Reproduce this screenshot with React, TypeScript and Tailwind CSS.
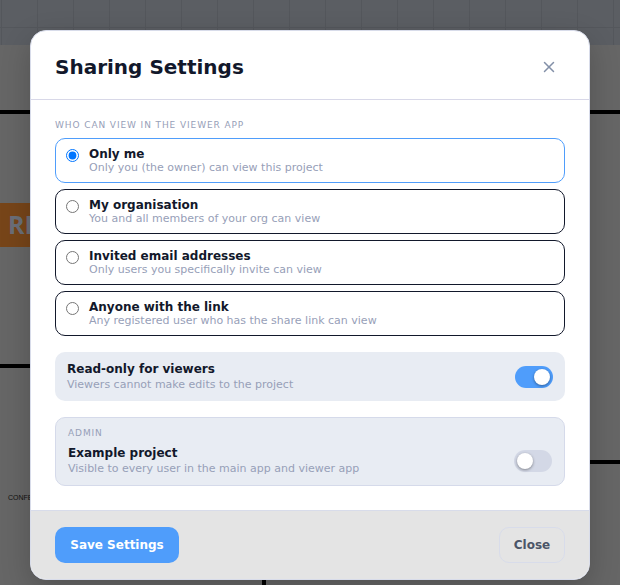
import { useState } from 'react'
import { X } from 'lucide-react'

const OPTIONS = [
  { id: 'owner', title: 'Only me', hint: 'Only you (the owner) can view this project' },
  { id: 'org', title: 'My organisation', hint: 'You and all members of your org can view' },
  { id: 'invited', title: 'Invited email addresses', hint: 'Only users you specifically invite can view' },
  { id: 'link', title: 'Anyone with the link', hint: 'Any registered user who has the share link can view' },
]

function Toggle({ on, onClick }: { on: boolean; onClick: () => void }) {
  return (
    <button
      onClick={onClick}
      className={`flex h-[22px] w-[38px] shrink-0 items-center rounded-full px-[3px] ${on ? 'justify-end bg-[#4f9dfb]' : 'justify-start bg-[#d3d8e6]'}`}
    >
      <span className="h-4 w-4 rounded-full bg-white shadow-[0_1px_3px_rgba(0,0,0,0.4)]" />
    </button>
  )
}

function Backdrop() {
  return (
    <div className="absolute inset-0 overflow-hidden bg-[#666666]">
      <div className="absolute left-0 right-0 top-0 h-[45px] bg-[#5b5e63] bg-[linear-gradient(to_right,#54575c_1px,transparent_1px),linear-gradient(to_bottom,#54575c_1px,transparent_1px)] bg-[size:36px_54px] bg-[position:1px_27px]" />
      <div className="absolute left-0 right-0 top-[110px] h-1 bg-black" />
      <div className="absolute left-0 top-[364px] h-1 w-[32px] bg-black" />
      <div className="absolute right-0 top-[460px] h-1 w-[32px] bg-black" />
      <div className="absolute left-[262px] top-[578px] h-[7px] w-1 bg-black" />
      <div className="absolute left-0 top-[203px] flex h-[44px] w-[32px] items-center whitespace-nowrap bg-[#774519] pl-[8px] text-[25px] font-bold text-[#6b6f78] font-['Open_Sans',sans-serif]">
        RE
      </div>
      <div className="absolute left-[8px] top-[493px] text-[7px] leading-[9px] text-[#111111] font-['Liberation_Sans',sans-serif]">CONFE</div>
    </div>
  )
}

export default function App() {
  const [access, setAccess] = useState('owner')
  const [readOnly, setReadOnly] = useState(true)
  const [example, setExample] = useState(false)

  return (
    <div className="relative flex h-[585px] w-[620px] items-start justify-center overflow-hidden pt-[30px] font-['DejaVu_Sans',sans-serif]">
      <Backdrop />
      <div className="relative flex h-[550px] w-[560px] flex-col overflow-hidden rounded-2xl border border-[#d8dcea] bg-white shadow-[0_10px_30px_rgba(0,0,0,0.2)]">
        {/* Header */}
        <div className="flex h-[69px] shrink-0 items-center justify-between border-b border-[#d8d8e8] pl-6 pr-[31px] pt-1">
          <h2 className="text-[20px] font-bold text-[#12182b]">Sharing Settings</h2>
          <X size={18} className="text-[#8390a8]" />
        </div>

        {/* Body */}
        <div className="flex flex-1 flex-col px-6 pt-[20px]">
          <div className="mb-[7px] text-[9px] leading-[11px] tracking-[0.9px] text-[#97a0b8]">WHO CAN VIEW IN THE VIEWER APP</div>

          <div className="flex flex-col gap-[6px]">
            {OPTIONS.map(o => (
              <label
                key={o.id}
                className={`flex h-[45px] cursor-pointer items-center gap-[10px] rounded-[10px] border pl-[10px] ${access === o.id ? 'border-[#4f9dfb]' : 'border-[#12182b]'}`}
              >
                <input
                  type="radio"
                  name="access"
                  checked={access === o.id}
                  onChange={() => setAccess(o.id)}
                  className="m-0 mt-[10px] h-[13px] w-[13px] shrink-0 self-start"
                />
                <div className="min-w-0">
                  <div className="text-[12px] font-bold leading-[14px] text-[#12182b]">{o.title}</div>
                  <div className="text-[11px] leading-[13px] text-[#97a0b8]">{o.hint}</div>
                </div>
              </label>
            ))}
          </div>

          {/* Read only */}
          <div className="mt-4 flex h-[49px] items-center justify-between rounded-[10px] bg-[#e8ecf3] px-3">
            <div>
              <div className="text-[12px] font-bold leading-[15px] text-[#12182b]">Read-only for viewers</div>
              <div className="text-[11px] leading-[15px] text-[#97a0b8]">Viewers cannot make edits to the project</div>
            </div>
            <Toggle on={readOnly} onClick={() => setReadOnly(!readOnly)} />
          </div>

          {/* Admin */}
          <div className="mt-4 rounded-[10px] border border-[#d5daea] bg-[#e8ecf3] px-3 pb-[3px] pt-[10px]">
            <div className="text-[9px] leading-[11px] tracking-[0.9px] text-[#97a0b8]">ADMIN</div>
            <div className="flex items-end justify-between">
              <div className="mt-[7px]">
                <div className="text-[12px] font-bold leading-[15px] text-[#12182b]">Example project</div>
                <div className="text-[11px] leading-[15px] text-[#97a0b8]">Visible to every user in the main app and viewer app</div>
              </div>
              <div className="mb-[4px]">
                <Toggle on={example} onClick={() => setExample(!example)} />
              </div>
            </div>
            <div className="h-[6px]" />
          </div>
        </div>

        {/* Footer */}
        <div className="flex h-[69px] shrink-0 items-center justify-between border-t border-[#d8dcea] bg-[#e4e4e4] px-6">
          <button className="flex h-9 w-[124px] items-center justify-center rounded-[10px] bg-[#4f9dfb] text-[12px] font-bold text-white">Save Settings</button>
          <button className="flex h-9 w-[66px] items-center justify-center rounded-[10px] border border-[#d8dcea] text-[12px] font-bold text-[#4b5568]">Close</button>
        </div>
      </div>
    </div>
  )
}
